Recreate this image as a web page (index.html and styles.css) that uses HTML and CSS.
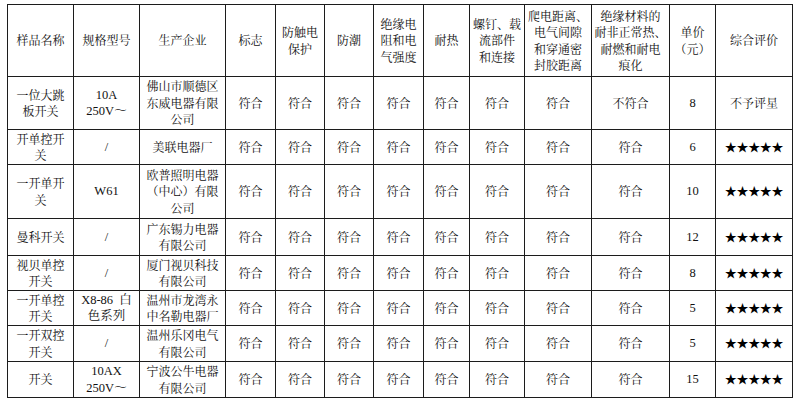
FILE: index.html
```html
<!DOCTYPE html>
<html lang="zh-CN">
<head>
<meta charset="utf-8">
<title>开关样品检测结果</title>
<link rel="stylesheet" href="styles.css">
</head>
<body>
<table class="report">
  <colgroup>
    <col class="c-name"><col class="c-spec"><col class="c-maker"><col class="c-mark">
    <col class="c-shock"><col class="c-damp"><col class="c-insul"><col class="c-heat">
    <col class="c-screw"><col class="c-creep"><col class="c-track"><col class="c-price">
    <col class="c-rate">
  </colgroup>
  <tr class="r-head">
    <th>样品名称</th>
    <th>规格型号</th>
    <th>生产企业</th>
    <th>标志</th>
    <th>防触电<br>保护</th>
    <th>防潮</th>
    <th>绝缘电<br>阻和电<br>气强度</th>
    <th>耐热</th>
    <th>螺钉、载<br>流部件<br>和连接</th>
    <th>爬电距离、<br>电气间隙<br>和穿通密<br>封胶距离</th>
    <th>绝缘材料的<br>耐非正常热、<br>耐燃和耐电<br>痕化</th>
    <th>单价<br>（元）</th>
    <th>综合评价</th>
  </tr>
  <tr class="r-53">
    <td>一位大跳<br>板开关</td>
    <td class="latin">10A<br>250V～</td>
    <td>佛山市顺德区<br>东威电器有限<br>公司</td>
    <td>符合</td><td>符合</td><td>符合</td><td>符合</td><td>符合</td><td>符合</td><td>符合</td>
    <td>不符合</td>
    <td class="latin">8</td>
    <td>不予评星</td>
  </tr>
  <tr class="r-35">
    <td>开单控开<br>关</td>
    <td class="latin">/</td>
    <td>美联电器厂</td>
    <td>符合</td><td>符合</td><td>符合</td><td>符合</td><td>符合</td><td>符合</td><td>符合</td><td>符合</td>
    <td class="latin">6</td>
    <td class="stars">★★★★★</td>
  </tr>
  <tr class="r-54">
    <td>一开单开<br>关</td>
    <td class="latin">W61</td>
    <td>欧普照明电器<br>（中心）有限<br>公司</td>
    <td>符合</td><td>符合</td><td>符合</td><td>符合</td><td>符合</td><td>符合</td><td>符合</td><td>符合</td>
    <td class="latin">10</td>
    <td class="stars">★★★★★</td>
  </tr>
  <tr class="r-37">
    <td>曼科开关</td>
    <td class="latin">/</td>
    <td>广东锡力电器<br>有限公司</td>
    <td>符合</td><td>符合</td><td>符合</td><td>符合</td><td>符合</td><td>符合</td><td>符合</td><td>符合</td>
    <td class="latin">12</td>
    <td class="stars">★★★★★</td>
  </tr>
  <tr class="r-35">
    <td>视贝单控<br>开关</td>
    <td class="latin">/</td>
    <td>厦门视贝科技<br>有限公司</td>
    <td>符合</td><td>符合</td><td>符合</td><td>符合</td><td>符合</td><td>符合</td><td>符合</td><td>符合</td>
    <td class="latin">8</td>
    <td class="stars">★★★★★</td>
  </tr>
  <tr class="r-35">
    <td>一开单控<br>开关</td>
    <td class="latin">X8-86&nbsp;&nbsp;白<br>色系列</td>
    <td>温州市龙湾永<br>中名勒电器厂</td>
    <td>符合</td><td>符合</td><td>符合</td><td>符合</td><td>符合</td><td>符合</td><td>符合</td><td>符合</td>
    <td class="latin">5</td>
    <td class="stars">★★★★★</td>
  </tr>
  <tr class="r-36">
    <td>一开双控<br>开关</td>
    <td class="latin">/</td>
    <td>温州乐冈电气<br>有限公司</td>
    <td>符合</td><td>符合</td><td>符合</td><td>符合</td><td>符合</td><td>符合</td><td>符合</td><td>符合</td>
    <td class="latin">5</td>
    <td class="stars">★★★★★</td>
  </tr>
  <tr class="r-36">
    <td>开关</td>
    <td class="latin">10AX<br>250V～</td>
    <td>宁波公牛电器<br>有限公司</td>
    <td>符合</td><td>符合</td><td>符合</td><td>符合</td><td>符合</td><td>符合</td><td>符合</td><td>符合</td>
    <td class="latin">15</td>
    <td class="stars">★★★★★</td>
  </tr>
</table>
</body>
</html>
```

FILE: styles.css
```css
html, body {
  margin: 0;
  padding: 0;
  background: #ffffff;
}

body {
  padding: 4px 0 0 7px;
  font-family: "Noto Serif CJK SC", "Noto Sans CJK SC", serif;
  color: #111111;
}

.report {
  border-collapse: collapse;
  table-layout: fixed;
  width: 786px;
  font-size: 12px;
  line-height: 16.5px;
}

.report th,
.report td {
  border: 1px solid #1c1c1c;
  padding: 0;
  text-align: center;
  vertical-align: middle;
  font-weight: normal;
  overflow: hidden;
  white-space: nowrap;
}

.latin {
  font-family: "Liberation Serif", "Noto Serif CJK SC", "Noto Sans CJK SC", serif;
  font-size: 12.5px;
}

.stars {
  font-family: "Noto Sans CJK SC", sans-serif;
  font-size: 12px;
  color: #000000;
  letter-spacing: -0.3px;
}

.c-name  { width: 66px; }
.c-spec  { width: 66px; }
.c-maker { width: 86px; }
.c-mark  { width: 50px; }
.c-shock { width: 49px; }
.c-damp  { width: 49px; }
.c-insul { width: 50px; }
.c-heat  { width: 46px; }
.c-screw { width: 55px; }
.c-creep { width: 67px; }
.c-track { width: 78px; }
.c-price { width: 46px; }
.c-rate  { width: 77px; }

.r-head { height: 72px; }
.r-53 { height: 53px; }
.r-54 { height: 54px; }
.r-37 { height: 37px; }
.r-36 { height: 36px; }
.r-35 { height: 35px; }
```
